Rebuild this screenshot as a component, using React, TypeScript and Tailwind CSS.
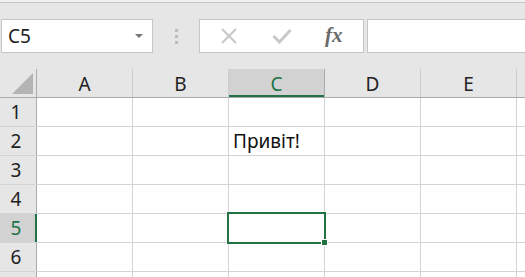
const cols = ['A', 'B', 'C', 'D', 'E', '']
const rows = [1, 2, 3, 4, 5, 6, 7]

const font = { fontFamily: '"Noto Sans", "Open Sans", sans-serif' }

function XIcon() {
  return (
    <svg width="18" height="18" viewBox="0 0 18 18">
      <path d="M2 2 L16 16 M16 2 L2 16" stroke="#c8c8c8" strokeWidth="2.2" fill="none" />
    </svg>
  )
}

function CheckIcon() {
  return (
    <svg width="20" height="16" viewBox="0 0 20 16">
      <path d="M1.5 8 L7.5 14 L18.5 2" stroke="#c8c8c8" strokeWidth="3" fill="none" />
    </svg>
  )
}

export default function App() {
  return (
    <div className="relative h-[277px] w-[525px] overflow-hidden bg-[#e6e6e6]" style={font}>
      <div className="h-[3px] border-b border-[#c6c6c6] bg-[#f0f0f0]" />

      {/* formula bar */}
      <div className="mt-[16px] flex h-[34px] items-stretch">
        <div className="ml-[1px] flex w-[152px] shrink-0 items-center justify-between border border-[#c6c6c6] bg-white pl-[6px] pr-[9px]">
          <span className="text-[19px] text-[#222]">C5</span>
          <span className="h-0 w-0 border-x-[4px] border-t-[4px] border-x-transparent border-t-[#777]" />
        </div>
        <div className="flex w-[46px] shrink-0 flex-col items-center justify-center gap-[3px]">
          <span className="h-[3px] w-[3px] bg-[#bdbdbd]" />
          <span className="h-[3px] w-[3px] bg-[#bdbdbd]" />
          <span className="h-[3px] w-[3px] bg-[#bdbdbd]" />
        </div>
        <div className="flex w-[165px] shrink-0 items-center border border-[#c6c6c6] bg-white">
          <div className="ml-[20px] flex w-[18px] justify-center">
            <XIcon />
          </div>
          <div className="ml-[34px] flex w-[20px] justify-center">
            <CheckIcon />
          </div>
          <span
            className="ml-[33px] text-[21px] font-bold italic text-[#6a6a6a]"
            style={{ fontFamily: '"Liberation Serif", serif' }}
          >
            fx
          </span>
        </div>
        <div className="ml-[3px] flex-1 border border-r-0 border-[#c6c6c6] bg-white" />
      </div>

      {/* sheet */}
      <div className="relative mt-[16px]">
        <div className="flex h-[29px] border-b border-[#ababab]">
          <div className="relative w-[37px] shrink-0 border-r border-[#ababab]">
            <svg className="absolute left-[12px] top-[4px]" width="21" height="21" viewBox="0 0 21 21">
              <path d="M21 0 L21 21 L0 21 Z" fill="#b4b4b4" />
            </svg>
          </div>
          {cols.map((c) => (
            <div
              key={c || 'f'}
              className={
                c === 'C'
                  ? 'flex w-[96px] shrink-0 items-center justify-center border-r border-[#ababab] bg-[#d2d2d2] pt-[2px] text-[19px] text-[#217346] shadow-[inset_0_-2px_0_#217346]'
                  : 'flex w-[96px] shrink-0 items-center justify-center border-r border-[#cdcdcd] pt-[2px] text-[19px] text-[#222]'
              }
            >
              {c}
            </div>
          ))}
        </div>
        {rows.map((r) => (
          <div key={r} className="flex h-[29px] border-b border-[#d4d4d4] bg-white">
            <div
              className={
                r === 5
                  ? 'flex w-[37px] shrink-0 items-center justify-center bg-[#d2d2d2] pr-[5px] text-[19px] text-[#217346] shadow-[inset_-2px_0_0_#217346]'
                  : 'flex w-[37px] shrink-0 items-center justify-center border-r border-[#ababab] bg-[#e6e6e6] pr-[4px] text-[19px] text-[#222]'
              }
            >
              {r < 7 ? r : ''}
            </div>
            {cols.map((c) => (
              <div
                key={c || 'f'}
                className="flex w-[96px] shrink-0 items-center border-r border-[#d4d4d4] pl-[4px] text-[19px] text-[#111]"
              >
                {c === 'C' && r === 2 ? 'Привіт!' : ''}
              </div>
            ))}
          </div>
        ))}

        {/* selection */}
        <div className="absolute left-[227px] top-[143px] h-[32px] w-[99px] border-2 border-[#217346]" />
        <div className="absolute left-[321px] top-[170px] h-[7px] w-[7px] border border-white bg-[#217346]" />
      </div>
    </div>
  )
}
